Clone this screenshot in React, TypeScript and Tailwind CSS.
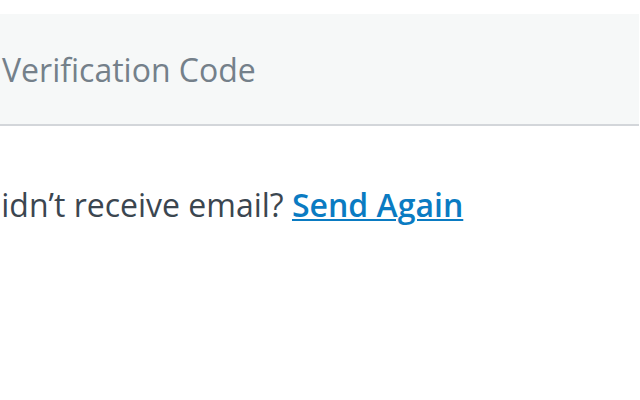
export default function App() {
  return (
    <div className="w-[640px] h-[400px] bg-white overflow-hidden" style={{ fontFamily: '"Open Sans", sans-serif' }}>
      <div className="pt-[14px] -ml-[22px] mr-[1px]">
        <div className="h-[112px] bg-[#f6f8f8] border-b-2 border-[#d3d6da] flex items-center pl-[24px] pt-[2px]">
          <span className="text-[32px] text-[#74808a] leading-none">Verification Code</span>
        </div>
        <p className="mt-[63px] text-[32px] text-[#3b4650] leading-none">
          Didn’t receive email?{" "}
          <a href="#" className="text-[#0a7bc2] font-semibold underline underline-offset-2 decoration-2">Send Again</a>
        </p>
      </div>
    </div>
  );
}
